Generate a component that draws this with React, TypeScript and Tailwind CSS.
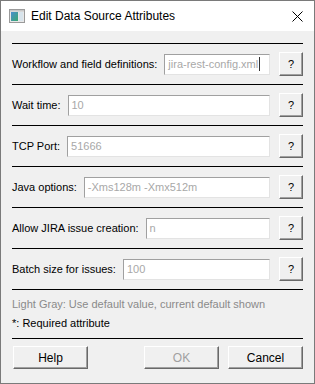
import React from "react";

const font = { fontFamily: '"Liberation Sans", Arial, sans-serif' };

function HelpBtn() {
  return (
    <div className="w-[24px] h-[24px] shrink-0 bg-[#f0f0f0] border-t border-l border-t-white border-l-white border-b border-r border-b-[#696969] border-r-[#696969] shadow-[inset_-1px_-1px_0_#a0a0a0] flex items-center justify-center text-[11px] text-black">
      ?
    </div>
  );
}

function Row({ label, value, caret }: { label: string; value: string; caret?: boolean }) {
  return (
    <div className="h-[41px] border-t border-black flex items-center">
      <span className="text-[11px] text-black whitespace-nowrap mr-[7px]">{label}</span>
      <div className="flex-1 h-[21px] bg-white border border-t-[#a0a0a0] border-l-[#a0a0a0] border-b-[#e3e3e3] border-r-[#e3e3e3] flex items-center pl-[3px] text-[11px] text-[#a8a8a8] overflow-hidden whitespace-nowrap">
        {value}
        {caret && <span className="inline-block w-px h-[14px] bg-[#333] ml-px" />}
      </div>
      <div className="ml-[9px]">
        <HelpBtn />
      </div>
    </div>
  );
}

function DlgBtn({ children, disabled }: { children: React.ReactNode; disabled?: boolean }) {
  return (
    <div
      className={
        "w-[75px] h-[23px] bg-[#f0f0f0] border-t border-l border-t-white border-l-white border-b border-r border-b-[#696969] border-r-[#696969] shadow-[inset_-1px_-1px_0_#a0a0a0] flex items-center justify-center text-[12px] " +
        (disabled ? "text-[#a0a0a0]" : "text-black")
      }
    >
      {children}
    </div>
  );
}

export default function App() {
  return (
    <div style={font} className="w-[315px] h-[384px] border border-[#7a7a7a] bg-[#f0f0f0] flex flex-col overflow-hidden">
      {/* title bar */}
      <div className="h-[30px] bg-white flex items-center shrink-0">
        <svg width="16" height="14" viewBox="0 0 16 14" className="ml-[8px] mr-[6px]">
          <rect x="0.5" y="0.5" width="15" height="13" fill="#e8e8e8" stroke="#9a9a9a" />
          <rect x="2" y="3" width="7" height="9" fill="url(#g)" />
          <rect x="10" y="3" width="4" height="9" fill="#d8e4ec" />
          <rect x="1" y="1" width="14" height="1.5" fill="#c8c8c8" />
          <defs>
            <linearGradient id="g" x1="0" y1="0" x2="1" y2="1">
              <stop offset="0" stopColor="#4a8fd0" />
              <stop offset="1" stopColor="#3aa870" />
            </linearGradient>
          </defs>
        </svg>
        <span className="text-[12px] text-black">Edit Data Source Attributes</span>
        <svg width="11" height="11" viewBox="0 0 11 11" className="ml-auto mr-[11px]">
          <path d="M0.5 0.5 L10.5 10.5 M10.5 0.5 L0.5 10.5" stroke="#000" strokeWidth="1" />
        </svg>
      </div>
      {/* content */}
      <div className="px-[11px] pt-[12px] flex flex-col flex-1">
        <Row label="Workflow and field definitions:" value="jira-rest-config.xml" caret />
        <Row label="Wait time:" value="10" />
        <Row label="TCP Port:" value="51666" />
        <Row label="Java options:" value="-Xms128m -Xmx512m" />
        <Row label="Allow JIRA issue creation:" value="n" />
        <Row label="Batch size for issues:" value="100" />
        <div className="border-t border-black pt-[6px]">
          <div className="text-[11px] text-[#8a8a8a] h-[16px] leading-[16px]">Light Gray: Use default value, current default shown</div>
          <div className="text-[11px] text-black h-[16px] leading-[16px] mt-[3px]">*: Required attribute</div>
        </div>
        <div className="border-t border-black mt-[7px] pt-[7px] flex">
          <div className="ml-[1px]">
            <DlgBtn>Help</DlgBtn>
          </div>
          <div className="ml-auto flex gap-[9px]">
            <DlgBtn disabled>OK</DlgBtn>
            <DlgBtn>Cancel</DlgBtn>
          </div>
        </div>
      </div>
    </div>
  );
}
